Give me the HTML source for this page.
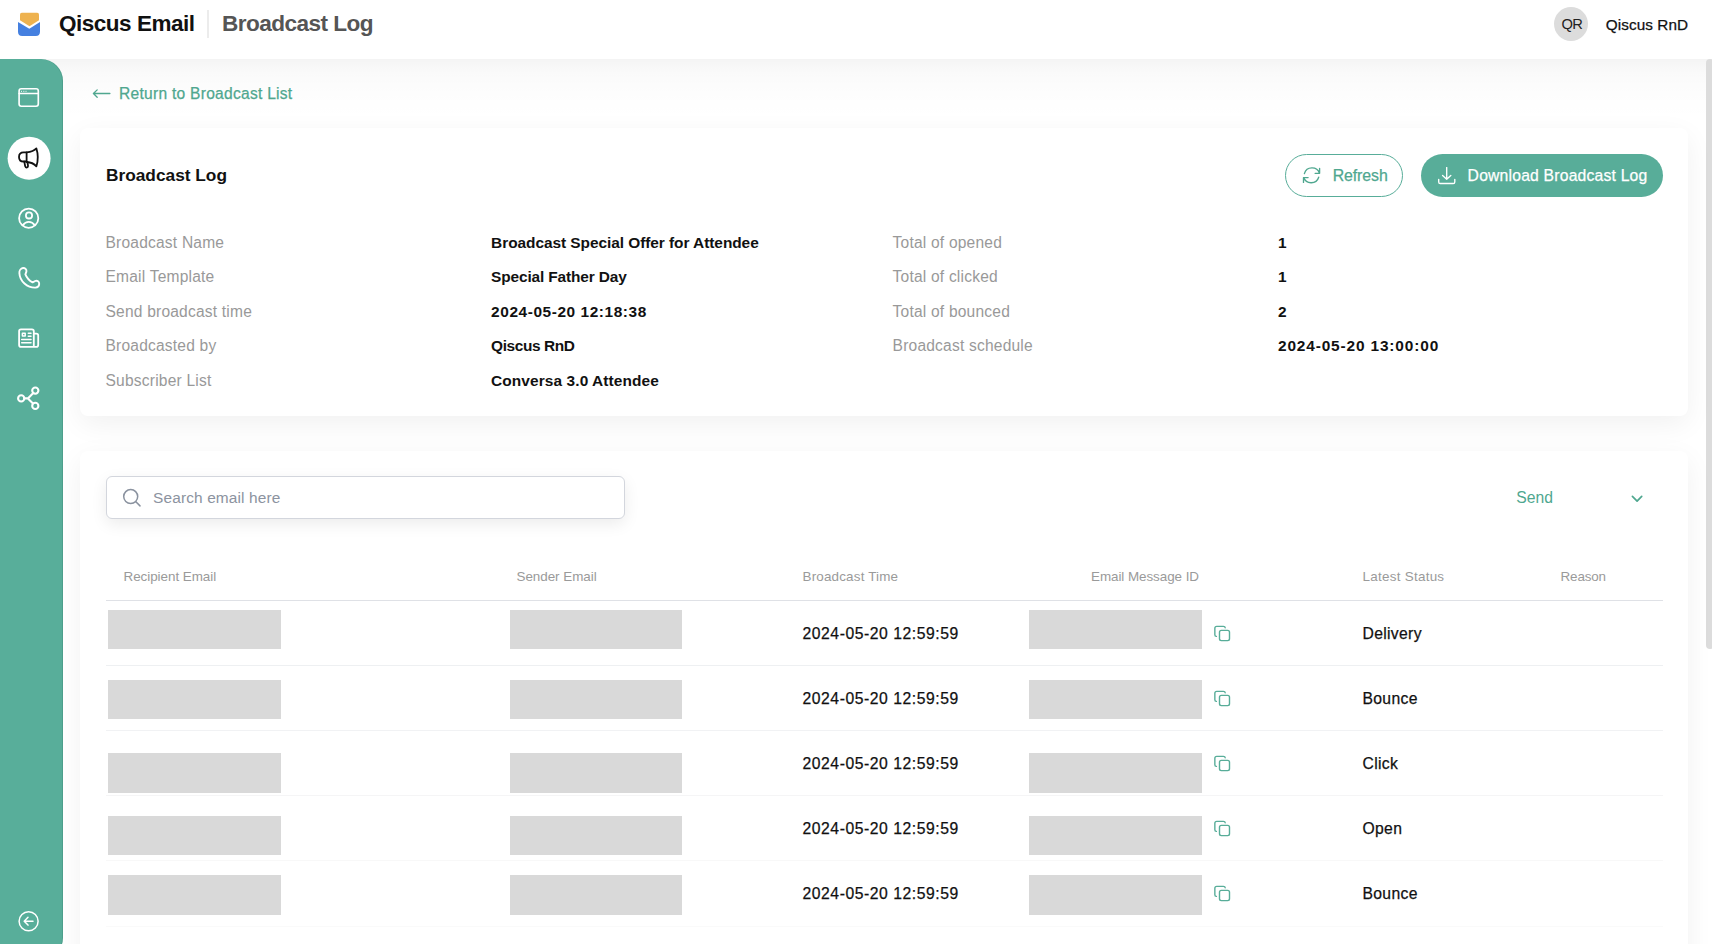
<!DOCTYPE html>
<html><head><meta charset="utf-8">
<style>
*{box-sizing:border-box;margin:0;padding:0}
html,body{width:1712px;height:944px;overflow:hidden;background:#fff;font-family:"Liberation Sans",sans-serif;color:#111}
.a{position:absolute;white-space:nowrap;line-height:1}
.md{-webkit-text-stroke:0.25px currentColor}
.teal{color:#4fa78f}
#side{position:absolute;left:0;top:59px;width:63px;height:899px;background:#58ae9a;box-shadow:inset -1px 0 0 rgba(0,60,40,0.12);border-top-right-radius:22px;border-bottom-right-radius:20px}
#main{position:absolute;left:0;top:59px;width:1712px;height:885px;background:#fff;overflow:hidden}
#main:before{content:"";position:absolute;left:0;top:0;right:0;height:60px;background:linear-gradient(rgba(0,0,0,0.045),rgba(0,0,0,0.018) 14px,rgba(0,0,0,0.006) 35px,rgba(0,0,0,0))}
.card{position:absolute;background:#fff;border-radius:8px;box-shadow:0 8px 28px rgba(0,0,0,0.06)}
.lbl{color:#999;font-size:15.57px;letter-spacing:0.2px}
.val{font-weight:700;font-size:15.43px}
.th{color:#9a9a9a;font-size:13.43px}
.blk{position:absolute;background:#d9d9d9}
.hl{position:absolute;left:106px;width:1557px;height:1px}
</style></head><body>
<!-- header -->
<svg class="a" style="left:0;top:0" width="60" height="45" viewBox="0 0 60 45">
 <path d="M21.8 12.8H37.2Q39 12.8 39 14.6V20.2L29.5 26.2L20 20.2V14.6Q20 12.8 21.8 12.8Z" fill="#eeb24f"/>
 <path d="M18 22L29.3 28.8L40 22V31.8Q40 36 35.8 36H22.2Q18 36 18 31.8Z" fill="#4580e0"/>
</svg>
<div class="a" style="left:59px;top:13.1px;font-size:22.5px;font-weight:700;letter-spacing:-0.48px;color:#111">Qiscus Email</div>
<div class="a" style="left:206.5px;top:10px;width:2px;height:28px;background:#ececec"></div>
<div class="a" style="left:222px;top:12.8px;font-size:22.6px;font-weight:700;letter-spacing:-0.55px;color:#555">Broadcast Log</div>
<div class="a" style="left:1554px;top:7px;width:34px;height:34px;border-radius:50%;background:#dcdcdc"></div>
<div class="a" style="left:1561.5px;top:16.6px;font-size:14.71px;letter-spacing:-0.8px;color:#222">QR</div>
<div class="a md" style="left:1605.8px;top:17.1px;font-size:15.3px;letter-spacing:0.08px;color:#111">Qiscus RnD</div>

<div id="main"></div>
<div id="side"></div>
<div class="a" style="left:1706px;top:59px;width:8px;height:590px;border-radius:4px;background:#dcdcdc"></div>

<!-- card 1 -->
<div class="card" style="left:80px;top:128px;width:1608px;height:288px"></div>
<!-- card 2 -->
<div class="card" style="left:80px;top:451px;width:1608px;height:600px"></div>

<!-- return link -->
<div class="a teal md" style="left:119px;top:85.6px;font-size:15.57px;letter-spacing:0.27px">Return to Broadcast List</div>
<div class="a teal" style="left:106px;top:166.5px;font-size:17.29px;font-weight:700;color:#111">Broadcast Log</div>


<!-- sidebar icons -->
<svg class="a" style="left:0;top:59px" width="63" height="885" viewBox="0 59 63 885" fill="none" stroke="#fff" stroke-width="1.8" stroke-linecap="round" stroke-linejoin="round">
 <rect x="19.1" y="88.7" width="19.2" height="17.6" rx="2.2" stroke-width="1.65"/>
 <path d="M19.1 93.5H38.3" stroke-width="1.6"/>
 <path d="M21.5 91.2V91.5M23.6 91.3H24M26 91.2V91.5" stroke-width="0.9"/>
 <circle cx="29.1" cy="158.2" r="21.5" fill="#fff" stroke="none"/>
 <g stroke="#111" stroke-width="1.8">
  <path d="M26.6 152.3H23.6Q19 152.3 19 156.9Q19 161.5 23.6 161.5H26.6Z"/>
  <path d="M26.6 152.3Q33.5 151.6 36.4 148.4Q39.2 157.3 36.4 166.3Q33 162.4 26.6 162"/>
  <path d="M24.3 161.6L25.2 166.3Q25.8 167.9 27.1 167.5Q28.3 167.1 28 165.6L27.4 162"/>
 </g>
 <circle cx="28.7" cy="218.2" r="9.6"/>
 <circle cx="29" cy="215.4" r="3.1"/>
 <path d="M22.6 225.4C24.4 223 26.5 221.9 28.8 221.9C31.1 221.9 33.2 223 35 225.4"/>
 <path d="M19.4 273.2C19.1 270.6 20.8 268.3 23 268C25 267.8 26.8 269.4 26.4 271.6L25.4 274.4C26.8 277.9 29.3 280.7 32.6 282.4L35.2 281C37.2 280.1 39.3 281.6 39.2 283.9C39.1 285.9 37.5 287.5 35.4 287.6C27.2 287.8 19.8 281.2 19.4 273.2Z" stroke-width="1.9"/>
 <path d="M33.8 346.8H21Q19.1 346.8 19.1 344.9V331.3Q19.1 329.4 21 329.4H31.9Q33.8 329.4 33.8 331.3V346.8H36.3Q38.2 346.8 38.2 344.9V335.5Q38.2 333.6 36.3 333.6H33.8"/>
 <rect x="22.4" y="333.3" width="2.8" height="2.8" stroke-width="1.5"/>
 <path d="M28.3 333.3H31M28.3 336.2H31M21.7 339.6H31M21.7 342.7H31" stroke-width="1.5"/>
 <g stroke-width="2.1">
 <circle cx="21.2" cy="398.4" r="3.1"/>
 <circle cx="35.3" cy="390.6" r="3.1"/>
 <circle cx="35.3" cy="405.9" r="3.1"/>
 <path d="M24.3 398.4H27.9L33 393.2M27.9 398.4L33 403.4"/>
 </g>
 <circle cx="28.6" cy="921.2" r="9.5" stroke-width="1.5"/>
 <path d="M24.4 921.2H33M28 917.3L24.2 921.2L28 925.1" stroke-width="1.5"/>
</svg>

<!-- return arrow -->
<svg class="a" style="left:0;top:0" width="120" height="110" viewBox="0 0 120 110" fill="none" stroke="#4fa78f" stroke-width="1.3" stroke-linecap="round" stroke-linejoin="round">
 <path d="M93.4 93.5H109.9M97.2 89.9L93.4 93.5L97.2 97.2"/>
</svg>

<!-- buttons -->
<div class="a" style="left:1285px;top:154px;width:118px;height:43px;border:1.2px solid #58ad99;border-radius:22px"></div>
<svg class="a" style="left:1296px;top:160px" width="30" height="30" viewBox="1296 160 30 30" fill="none" stroke="#4fa78f" stroke-width="1.35" stroke-linecap="round" stroke-linejoin="round">
 <path d="M1304.4 173.6A7.9 7.9 0 0 1 1319.5 173.3M1319.6 168.3V173.3H1315.1M1318.7 177.2A8 8 0 0 1 1303.6 177.6M1303.5 182.4V177.6H1308.1"/>
</svg>
<div class="a teal md" style="left:1332.7px;top:167.5px;font-size:15.9px;letter-spacing:-0.1px">Refresh</div>
<div class="a" style="left:1421px;top:154px;width:242px;height:43px;background:#58ad99;border-radius:22px"></div>
<svg class="a" style="left:1437.8px;top:167px" width="18" height="18" viewBox="0 0 18 18" fill="none" stroke="#fff" stroke-width="1.35" stroke-linecap="round" stroke-linejoin="round">
 <path d="M8.7 0.5V12.2M4.6 8.5L8.7 12.3L12.8 8.5M0.7 12.3V14.9Q0.7 16.5 2.3 16.5H15.2Q16.8 16.5 16.8 14.9V12.3"/>
</svg>
<div class="a md" style="left:1467.6px;top:167.7px;font-size:15.71px;letter-spacing:0.2px;color:#fff">Download Broadcast Log</div>

<!-- details -->
<div class="a lbl" style="left:105.5px;top:234.9px">Broadcast Name</div>
<div class="a lbl" style="left:105.5px;top:269.4px">Email Template</div>
<div class="a lbl" style="left:105.5px;top:303.8px">Send broadcast time</div>
<div class="a lbl" style="left:105.5px;top:338.1px">Broadcasted by</div>
<div class="a lbl" style="left:105.5px;top:373px">Subscriber List</div>
<div class="a val" style="left:491.1px;top:234.9px;letter-spacing:-0.05px">Broadcast Special Offer for Attendee</div>
<div class="a val" style="left:491.1px;top:269.4px;letter-spacing:-0.14px">Special Father Day</div>
<div class="a val" style="left:491.1px;top:303.8px;letter-spacing:0.57px">2024-05-20 12:18:38</div>
<div class="a val" style="left:491.1px;top:338.1px;letter-spacing:-0.41px">Qiscus RnD</div>
<div class="a val" style="left:491.1px;top:373px;letter-spacing:0.1px">Conversa 3.0 Attendee</div>
<div class="a lbl" style="left:892.6px;top:234.9px">Total of opened</div>
<div class="a lbl" style="left:892.6px;top:269.4px">Total of clicked</div>
<div class="a lbl" style="left:892.6px;top:303.8px">Total of bounced</div>
<div class="a lbl" style="left:892.6px;top:338.1px">Broadcast schedule</div>
<div class="a val" style="left:1278px;top:234.9px">1</div>
<div class="a val" style="left:1278px;top:269.4px">1</div>
<div class="a val" style="left:1278px;top:303.8px">2</div>
<div class="a val" style="left:1278px;top:338.1px;letter-spacing:0.85px">2024-05-20 13:00:00</div>

<!-- search -->
<div class="a" style="left:106px;top:476px;width:519px;height:43px;border:1px solid #d3d6dd;border-radius:6px;background:#fff;box-shadow:0 5px 16px rgba(0,0,0,0.08)"></div>
<svg class="a" style="left:0;top:440px" width="200" height="80" viewBox="0 440 200 80" fill="none" stroke="#8a929f" stroke-width="1.5" stroke-linecap="round">
 <circle cx="130.7" cy="496.6" r="7"/>
 <path d="M135.9 501.8L140 505.9"/>
</svg>
<div class="a" style="left:153.1px;top:489.9px;font-size:15.43px;letter-spacing:0.13px;color:#8c93a0">Search email here</div>
<div class="a teal" style="left:1516.2px;top:489.8px;font-size:15.71px;letter-spacing:0.07px">Send</div>
<svg class="a" style="left:1620px;top:480px" width="30" height="30" viewBox="1620 480 30 30" fill="none" stroke="#4fa78f" stroke-width="1.7" stroke-linecap="round" stroke-linejoin="round">
 <path d="M1632.4 496.4L1637.1 501.1L1641.7 496.4"/>
</svg>

<!-- table header -->
<div class="a th" style="left:123.5px;top:569.9px;letter-spacing:-0.04px">Recipient Email</div>
<div class="a th" style="left:516.5px;top:569.9px;letter-spacing:-0.04px">Sender Email</div>
<div class="a th" style="left:802.5px;top:569.9px;letter-spacing:0.18px">Broadcast Time</div>
<div class="a th" style="left:1091px;top:569.9px;letter-spacing:-0.06px">Email Message ID</div>
<div class="a th" style="left:1362.5px;top:569.9px;letter-spacing:0.27px">Latest Status</div>
<div class="a th" style="left:1560.5px;top:569.9px;letter-spacing:-0.14px">Reason</div>
<div class="hl" style="top:600px;background:#dfe1e6"></div>
<div class="blk" style="left:107.5px;top:609.5px;width:173px;height:39.6px"></div>
<div class="blk" style="left:509.5px;top:609.5px;width:172.7px;height:39.6px"></div>
<div class="blk" style="left:1029.4px;top:609.5px;width:172.9px;height:39.6px"></div>
<div class="a md" style="left:802.5px;top:626.2px;font-size:15.71px;letter-spacing:0.55px;color:#111">2024-05-20 12:59:59</div>
<div class="a md" style="left:1362.5px;top:626.2px;font-size:15.71px;letter-spacing:0.33px;color:#111">Delivery</div>
<svg class="a" style="left:1210px;top:620px" width="24" height="26" viewBox="0 0 24 26" fill="none" stroke="#58ad99" stroke-width="1.4" stroke-linecap="round" stroke-linejoin="round">
 <path d="M6.4 16.4Q4.85 16.3 4.85 14.8V8.3Q4.85 6.4 6.7 6.4H13.4Q15.1 6.4 15.2 7.8"/>
 <rect x="9.5" y="10.4" width="10" height="10.2" rx="1.8"/>
</svg>
<div class="hl" style="top:665px;background:#eef0f2"></div>
<div class="blk" style="left:107.5px;top:679.5px;width:173px;height:39.6px"></div>
<div class="blk" style="left:509.5px;top:679.5px;width:172.7px;height:39.6px"></div>
<div class="blk" style="left:1029.4px;top:679.5px;width:172.9px;height:39.6px"></div>
<div class="a md" style="left:802.5px;top:691.2px;font-size:15.71px;letter-spacing:0.55px;color:#111">2024-05-20 12:59:59</div>
<div class="a md" style="left:1362.5px;top:691.2px;font-size:15.71px;letter-spacing:0.33px;color:#111">Bounce</div>
<svg class="a" style="left:1210px;top:685px" width="24" height="26" viewBox="0 0 24 26" fill="none" stroke="#58ad99" stroke-width="1.4" stroke-linecap="round" stroke-linejoin="round">
 <path d="M6.4 16.4Q4.85 16.3 4.85 14.8V8.3Q4.85 6.4 6.7 6.4H13.4Q15.1 6.4 15.2 7.8"/>
 <rect x="9.5" y="10.4" width="10" height="10.2" rx="1.8"/>
</svg>
<div class="hl" style="top:730px;background:#f1f2f4"></div>
<div class="blk" style="left:107.5px;top:753.3px;width:173px;height:39.6px"></div>
<div class="blk" style="left:509.5px;top:753.3px;width:172.7px;height:39.6px"></div>
<div class="blk" style="left:1029.4px;top:753.3px;width:172.9px;height:39.6px"></div>
<div class="a md" style="left:802.5px;top:756.2px;font-size:15.71px;letter-spacing:0.55px;color:#111">2024-05-20 12:59:59</div>
<div class="a md" style="left:1362.5px;top:756.2px;font-size:15.71px;letter-spacing:0.33px;color:#111">Click</div>
<svg class="a" style="left:1210px;top:750px" width="24" height="26" viewBox="0 0 24 26" fill="none" stroke="#58ad99" stroke-width="1.4" stroke-linecap="round" stroke-linejoin="round">
 <path d="M6.4 16.4Q4.85 16.3 4.85 14.8V8.3Q4.85 6.4 6.7 6.4H13.4Q15.1 6.4 15.2 7.8"/>
 <rect x="9.5" y="10.4" width="10" height="10.2" rx="1.8"/>
</svg>
<div class="hl" style="top:795px;background:#f5f5f6"></div>
<div class="blk" style="left:107.5px;top:815.5px;width:173px;height:39.6px"></div>
<div class="blk" style="left:509.5px;top:815.5px;width:172.7px;height:39.6px"></div>
<div class="blk" style="left:1029.4px;top:815.5px;width:172.9px;height:39.6px"></div>
<div class="a md" style="left:802.5px;top:821.2px;font-size:15.71px;letter-spacing:0.55px;color:#111">2024-05-20 12:59:59</div>
<div class="a md" style="left:1362.5px;top:821.2px;font-size:15.71px;letter-spacing:0.33px;color:#111">Open</div>
<svg class="a" style="left:1210px;top:815px" width="24" height="26" viewBox="0 0 24 26" fill="none" stroke="#58ad99" stroke-width="1.4" stroke-linecap="round" stroke-linejoin="round">
 <path d="M6.4 16.4Q4.85 16.3 4.85 14.8V8.3Q4.85 6.4 6.7 6.4H13.4Q15.1 6.4 15.2 7.8"/>
 <rect x="9.5" y="10.4" width="10" height="10.2" rx="1.8"/>
</svg>
<div class="hl" style="top:860px;background:#f8f8f8"></div>
<div class="blk" style="left:107.5px;top:875.2px;width:173px;height:39.6px"></div>
<div class="blk" style="left:509.5px;top:875.2px;width:172.7px;height:39.6px"></div>
<div class="blk" style="left:1029.4px;top:875.2px;width:172.9px;height:39.6px"></div>
<div class="a md" style="left:802.5px;top:886.2px;font-size:15.71px;letter-spacing:0.55px;color:#111">2024-05-20 12:59:59</div>
<div class="a md" style="left:1362.5px;top:886.2px;font-size:15.71px;letter-spacing:0.33px;color:#111">Bounce</div>
<svg class="a" style="left:1210px;top:880px" width="24" height="26" viewBox="0 0 24 26" fill="none" stroke="#58ad99" stroke-width="1.4" stroke-linecap="round" stroke-linejoin="round">
 <path d="M6.4 16.4Q4.85 16.3 4.85 14.8V8.3Q4.85 6.4 6.7 6.4H13.4Q15.1 6.4 15.2 7.8"/>
 <rect x="9.5" y="10.4" width="10" height="10.2" rx="1.8"/>
</svg>
<div class="hl" style="top:926px;background:#fafafa"></div>

</body></html>
